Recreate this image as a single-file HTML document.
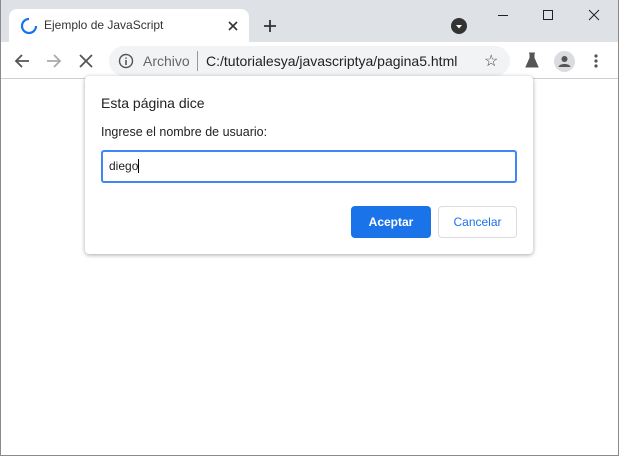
<!DOCTYPE html>
<html><head><meta charset="utf-8"><style>
*{margin:0;padding:0;box-sizing:border-box}
body{width:619px;height:456px;position:relative;background:#fff;font-family:"Liberation Sans",sans-serif;overflow:hidden}
.abs{position:absolute}
</style></head><body>
<div class="abs" style="left:0;top:0;width:619px;height:42px;background:#dee1e6"></div>
<div class="abs" style="left:9px;top:9px;width:240px;height:34px;background:#fff;border-radius:8px 8px 0 0"></div>
<svg class="abs" style="left:20px;top:17px" width="18" height="18"><path d="M9 2 A7 7 0 1 0 16 9" fill="none" stroke="#1a73e8" stroke-width="2.2"/></svg>
<div class="abs" style="left:44px;top:18px;font-size:12px;color:#333">Ejemplo de JavaScript</div>
<svg class="abs" style="left:227px;top:20px" width="12" height="12"><path d="M2 2L10 10M10 2L2 10" stroke="#333" stroke-width="1.6"/></svg>
<svg class="abs" style="left:263px;top:19px" width="14" height="14"><path d="M7 1V13M1 7H13" stroke="#333" stroke-width="1.8"/></svg>
<div class="abs" style="left:451px;top:18px;width:16px;height:16px;border-radius:50%;background:#333"></div>
<svg class="abs" style="left:451px;top:18px" width="16" height="16"><path d="M5 7H11L8 10.5Z" fill="#fff"/></svg>
<div class="abs" style="left:498px;top:15px;width:10px;height:1px;background:#222"></div>
<div class="abs" style="left:543px;top:10px;width:10px;height:10px;border:1px solid #222"></div>
<svg class="abs" style="left:588px;top:9px" width="12" height="12"><path d="M1 1L11 11M11 1L1 11" stroke="#222" stroke-width="1"/></svg>
<div class="abs" style="left:0;top:78px;width:619px;height:1px;background:#d0d0d0"></div>
<svg class="abs" style="left:13px;top:52px" width="18" height="18"><path d="M16 9H3M9 3L3 9L9 15" fill="none" stroke="#555" stroke-width="1.8"/></svg>
<svg class="abs" style="left:45px;top:52px" width="18" height="18"><path d="M2 9H15M9 3L15 9L9 15" fill="none" stroke="#aaa" stroke-width="1.8"/></svg>
<svg class="abs" style="left:78px;top:53px" width="16" height="16"><path d="M2 2L14 14M14 2L2 14" stroke="#555" stroke-width="1.8"/></svg>
<div class="abs" style="left:109px;top:46px;width:401px;height:30px;background:#f1f3f4;border-radius:15px"></div>
<svg class="abs" style="left:118px;top:53px" width="16" height="16"><circle cx="8" cy="8" r="6.5" fill="none" stroke="#555" stroke-width="1.4"/><path d="M8 7V12M8 4.5V5.8" stroke="#555" stroke-width="1.6"/></svg>
<div class="abs" style="left:143px;top:53px;font-size:14px;color:#666">Archivo</div>
<div class="abs" style="left:197px;top:51px;width:1px;height:20px;background:#999"></div>
<div class="abs" style="left:206px;top:53px;font-size:14px;color:#222">C:/tutorialesya/javascriptya/pagina5.html</div>
<div class="abs" style="left:484px;top:51px;font-size:16px;color:#444">☆</div>
<svg class="abs" style="left:524px;top:52px" width="16" height="16"><path d="M5 1H11M6 1V6L2 15H14L10 6V1" fill="#555" stroke="#555"/></svg>
<div class="abs" style="left:554px;top:51px;width:21px;height:21px;border-radius:50%;background:#dadce0"></div>
<svg class="abs" style="left:554px;top:51px" width="21" height="21"><circle cx="10.5" cy="8" r="3" fill="#555"/><path d="M4.5 16C5 12 16 12 16.5 16Z" fill="#555"/></svg>
<svg class="abs" style="left:592px;top:53px" width="8" height="16"><circle cx="4" cy="3" r="1.6" fill="#555"/><circle cx="4" cy="8" r="1.6" fill="#555"/><circle cx="4" cy="13" r="1.6" fill="#555"/></svg>
<div class="abs" style="left:85px;top:76px;width:448px;height:178px;background:#fff;border-radius:4px;box-shadow:0 1px 4px rgba(0,0,0,.35)"></div>
<div class="abs" style="left:101px;top:95px;font-size:14px;color:#222">Esta página dice</div>
<div class="abs" style="left:101px;top:125px;font-size:12.5px;color:#222">Ingrese el nombre de usuario:</div>
<div class="abs" style="left:101px;top:150px;width:416px;height:33px;border:2px solid #4285f4;border-radius:3px"></div>
<div class="abs" style="left:109px;top:159px;font-size:12px;color:#222">diego<span style="display:inline-block;width:1px;height:14px;background:#000;vertical-align:-3px"></span></div>
<div class="abs" style="left:351px;top:206px;width:80px;height:32px;background:#1a73e8;border-radius:4px;color:#fff;font-size:12px;font-weight:bold;text-align:center;line-height:32px">Aceptar</div>
<div class="abs" style="left:438px;top:206px;width:79px;height:32px;border:1px solid #dadce0;border-radius:4px;color:#1a73e8;font-size:12px;text-align:center;line-height:30px">Cancelar</div>
<div class="abs" style="left:0;top:0;width:619px;height:456px;border:1px solid #8a8a8a;border-top:none;pointer-events:none"></div>
</body></html>
